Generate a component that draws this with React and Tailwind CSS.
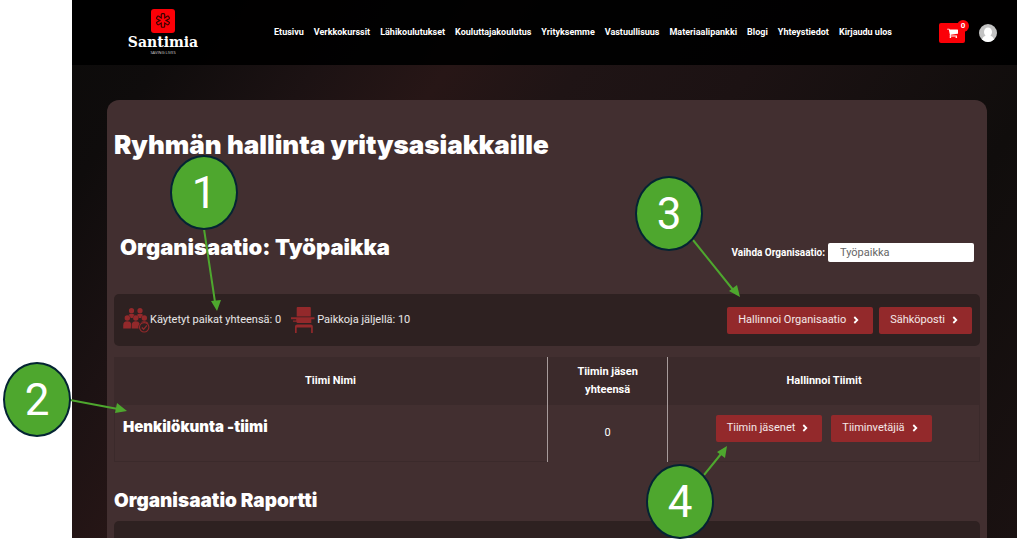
const NAV = [
  'Etusivu',
  'Verkkokurssit',
  'Lähikoulutukset',
  'Kouluttajakoulutus',
  'Yrityksemme',
  'Vastuullisuus',
  'Materiaalipankki',
  'Blogi',
  'Yhteystiedot',
  'Kirjaudu ulos',
];

function Logo() {
  return (
    <a href="#" className="mt-[9px] flex w-[72px] flex-col items-center">
      <svg viewBox="0 0 24 24" className="size-6" aria-hidden="true">
        <rect width="24" height="24" rx="3" fill="#fb0007" />
        <path
          d="M10.300 5.600q0-1 1-1h1.400q1 0 1 1v3.300l2.500-1.600q1-.6 1.500.3l.6 1q.5.900-.4 1.400l-2.800 1.400 2.800 1.500q.9.500.4 1.300l-.6 1.100q-.5.900-1.500.3l-2.500-1.600v3.300q0 1-1 1h-1.400q-1 0-1-1v-3.300l-2.500 1.600q-1 .6-1.500-.3l-.6-1.100q-.5-.8.4-1.300l2.800-1.500-2.800-1.400q-.9-.5-.4-1.400l.6-1q.5-.9 1.500-.3l2.500 1.600z"
          fill="none"
          stroke="#300"
          strokeWidth="1.100"
        />
      </svg>
      <span className="font-['DejaVu_Serif',serif] text-[14px] leading-[18px] font-bold text-white">Santimia</span>
      <span className="font-['Open_Sans',sans-serif] text-[4px] leading-[3px] text-neutral-300">SAVING LIVES</span>
    </a>
  );
}

function CartIcon() {
  return (
    <svg viewBox="0 0 1664 1792" className="h-3 w-[11px]" fill="currentColor" aria-hidden="true">
      <path d="M640 1536q0 52-38 90t-90 38-90-38-38-90 38-90 90-38 90 38 38 90zm896 0q0 52-38 90t-90 38-90-38-38-90 38-90 90-38 90 38 38 90zm128-1088v512q0 24-16.500 42.500t-40.500 21.500l-1044 122q13 60 13 70 0 16-24 64h920q26 0 45 19t19 45-19 45-45 19h-1024q-26 0-45-19t-19-45q0-11 8-31.500t16-36 21.500-40 15.500-29.500l-177-823h-204q-26 0-45-19t-19-45 19-45 45-19h256q16 0 28.500 6.500t19.500 15.500 13 24.500 8 26 5.500 29.500 4.500 26h1201q26 0 45 19t19 45z" />
    </svg>
  );
}

function ActionButton({ children }) {
  return (
    <button
      type="button"
      className="flex h-[27px] items-center gap-[6px] rounded-xs bg-[#93292b] pr-[13px] pl-[11px] text-[11px] whitespace-nowrap text-white/90"
    >
      {children}
      <svg viewBox="0 0 8 8" className="size-2" aria-hidden="true">
        <path d="M2.300 1l3 3-3 3" fill="none" stroke="#fff" strokeWidth="1.800" />
      </svg>
    </button>
  );
}

function PeopleIcon() {
  return (
    <svg viewBox="0 0 27 26" className="h-[26px] w-[27px]" aria-hidden="true">
      <g fill="#93292b">
        <circle cx="8.500" cy="3.700" r="2.600" />
        <circle cx="17" cy="3.700" r="2.600" />
        <path d="M5.500 8q1.200-1.300 3-1.300t3.200 1.300q-1.900 1-2 3H7.600Q7.500 9 5.500 8zM13.800 8q1.200-1.300 3.200-1.300T20.200 8q-2 1-2 3h-2.400q0-2-2-3z" />
        <circle cx="4.300" cy="11" r="2.700" />
        <circle cx="12.800" cy="11" r="2.700" />
        <circle cx="21.300" cy="11" r="2.700" />
        <path d="M.2 21.500v-3q0-4.200 4.100-4.200 3.200 0 3.900 2.200l-.4 5zM8.700 21.500v-3q0-4.200 4.100-4.200 3 0 3.900 2.400-2 2.300-1.200 4.800zM17.500 15.500q1.300-1.200 3.800-1.200 3.700 0 4.200 3.200-3.500-3.300-8-2z" />
      </g>
      <circle cx="21.200" cy="20.300" r="4.700" fill="#2e2121" stroke="#93292b" strokeWidth="1.100" />
      <path d="M18.800 20.500l1.800 1.800 3.300-3.900" fill="none" stroke="#93292b" strokeWidth="1.300" />
    </svg>
  );
}

function DeskIcon() {
  return (
    <svg viewBox="0 0 24 28" className="h-7 w-6" aria-hidden="true">
      <path
        fill="#93292b"
        d="M6.500 1h12.500q.8 0 .8 1v8.500H5.700V2q0-1 .8-1zM0 11.300h23.500v2H20.300v3.700H6.500q-1 0-1-1.200H2v-1.200h3.200v-1.300H0zM6.200 18.500h13.600q2 0 2 2v6.500h-1.700v-5.500H5.700v5.500H4v-6.500q0-2 2.200-2z"
      />
    </svg>
  );
}

function Callout({ number, className }) {
  return (
    <div
      className={`absolute flex h-[75px] w-[68px] items-center justify-center rounded-[50%] border-2 border-[#042433] bg-[#4ea72e] text-[44px] leading-none text-white ${className}`}
    >
      {number}
    </div>
  );
}

const DISPLAY = 'font-[Inter,sans-serif] font-black text-white';

export default function App() {
  return (
    <div className="relative bg-white pb-1 pl-[72px] font-[Roboto,sans-serif]">
      <div className="bg-[linear-gradient(125deg,#0c0b0a_0%,#0f0c0c_10%,#1c1213_22%,#271616_32%,#1f1415_42%,#1c1213_55%,#100d0c_78%,#1a1111_100%)]">
        <header className="flex h-[65px] bg-black/95 pr-[20px] pl-[55px]">
          <Logo />
          <nav className="ml-auto flex items-center gap-[10px] text-[9px] font-bold whitespace-nowrap text-white">
            {NAV.map((item) => (
              <a href="#" key={item}>{item}</a>
            ))}
          </nav>
          <div className="ml-[47px] flex items-center gap-[14px]">
            <button type="button" aria-label="Ostoskori" className="relative flex h-5 w-[26px] items-center justify-center rounded-xs bg-[#fb0007] text-white">
              <CartIcon />
              <span className="absolute -top-[3px] -right-[4px] flex size-3 items-center justify-center rounded-full bg-[#fb0007] text-[8px] font-bold">0</span>
            </button>
            <svg viewBox="0 0 18 18" className="size-[18px]" aria-hidden="true">
              <circle cx="9" cy="9" r="9" fill="#c3c3c3" />
              <ellipse cx="9" cy="8" rx="4" ry="4.500" fill="#fff" />
              <path d="M3 15.500q1-3.500 4.500-4h3q3.500.5 4.500 4-6 5-12 0z" fill="#fff" />
            </svg>
          </div>
        </header>

        <div className="pt-[35px] pr-[30px] pl-[35px]">
          <main className="rounded-t-xl bg-[#422f30] px-[7px] pt-[30px]">
            <h1 className={`${DISPLAY} text-[26px] leading-[30px]`}>Ryhmän hallinta yritysasiakkaille</h1>

            <div className="mt-[72px] flex items-center justify-between px-[6px]">
              <h2 className={`${DISPLAY} text-[22px] leading-[30px]`}>Organisaatio: Työpaikka</h2>
              <div className="flex items-center gap-[3px] pt-[10px]">
                <label htmlFor="org" className="text-[10px] font-bold text-white">Vaihda Organisaatio:</label>
                <select id="org" className="h-[19px] w-[146px] appearance-none rounded-xs bg-white px-3 text-[11px] leading-[19px] text-[#666]">
                  <option>Työpaikka</option>
                </select>
              </div>
            </div>

            <section className="mt-8 flex h-[52px] items-center rounded-[5px] bg-[#2e2121] pr-2 pl-[9px] text-[11px] text-white/90">
              <PeopleIcon />
              <span>Käytetyt paikat yhteensä: 0</span>
              <span className="ml-[10px]"><DeskIcon /></span>
              <span className="ml-[2px]">Paikkoja jäljellä: 10</span>
              <div className="ml-auto flex gap-[6px]">
                <ActionButton>Hallinnoi Organisaatio</ActionButton>
                <ActionButton>Sähköposti</ActionButton>
              </div>
            </section>

            <table className="mt-[11px] w-full table-fixed border-separate border-spacing-0 text-center text-[11px] text-white">
              <colgroup>
                <col className="w-[50%]" />
                <col className="w-[14%]" />
                <col className="w-[36%]" />
              </colgroup>
              <thead className="bg-[#3b2a2b]">
                <tr className="h-12">
                  <th>Tiimi Nimi</th>
                  <th className="border-x border-[#a79b9b] px-5 leading-[18px]">Tiimin jäsen yhteensä</th>
                  <th>Hallinnoi Tiimit</th>
                </tr>
              </thead>
              <tbody>
                <tr className="h-[57px]">
                  <td className="border-b border-l border-[#3b2a2b] pb-3 pl-2 text-left">
                    <h3 className={`${DISPLAY} text-[15px] leading-5`}>Henkilökunta -tiimi</h3>
                  </td>
                  <td className="border-x border-[#a79b9b]">0</td>
                  <td className="border-r border-b border-[#3b2a2b] pb-[10px]">
                    <div className="flex justify-center gap-[9px]">
                      <ActionButton>Tiimin jäsenet</ActionButton>
                      <ActionButton>Tiiminvetäjiä</ActionButton>
                    </div>
                  </td>
                </tr>
              </tbody>
            </table>

            <h2 className={`${DISPLAY} mt-[27px] text-[19px] leading-6`}>Organisaatio Raportti</h2>
            <section className="mt-2 h-[17px] rounded-t-[5px] bg-[#2e2121]" />
          </main>
        </div>
      </div>

      <svg viewBox="0 0 1017 542" className="pointer-events-none absolute top-0 left-0 h-[542px] w-[1017px]" aria-hidden="true">
        <g stroke="#4ea72e" strokeWidth="2" fill="none">
          <path d="M204 229L215 302M70 400L118 409M693 240L734 291M704 475L721 454" />
        </g>
        <g fill="#4ea72e">
          <path d="M217 311l-6-10 10-1zM127 411l-12 2 2-10zM740 297l-11-6 8-6zM727 446l-2 12-8-6z" />
        </g>
      </svg>
      <Callout number="1" className="top-[155px] left-[170px]" />
      <Callout number="2" className="top-[362px] left-[3px]" />
      <Callout number="3" className="top-[176px] left-[635px]" />
      <Callout number="4" className="top-[464px] left-[646px]" />
    </div>
  );
}
